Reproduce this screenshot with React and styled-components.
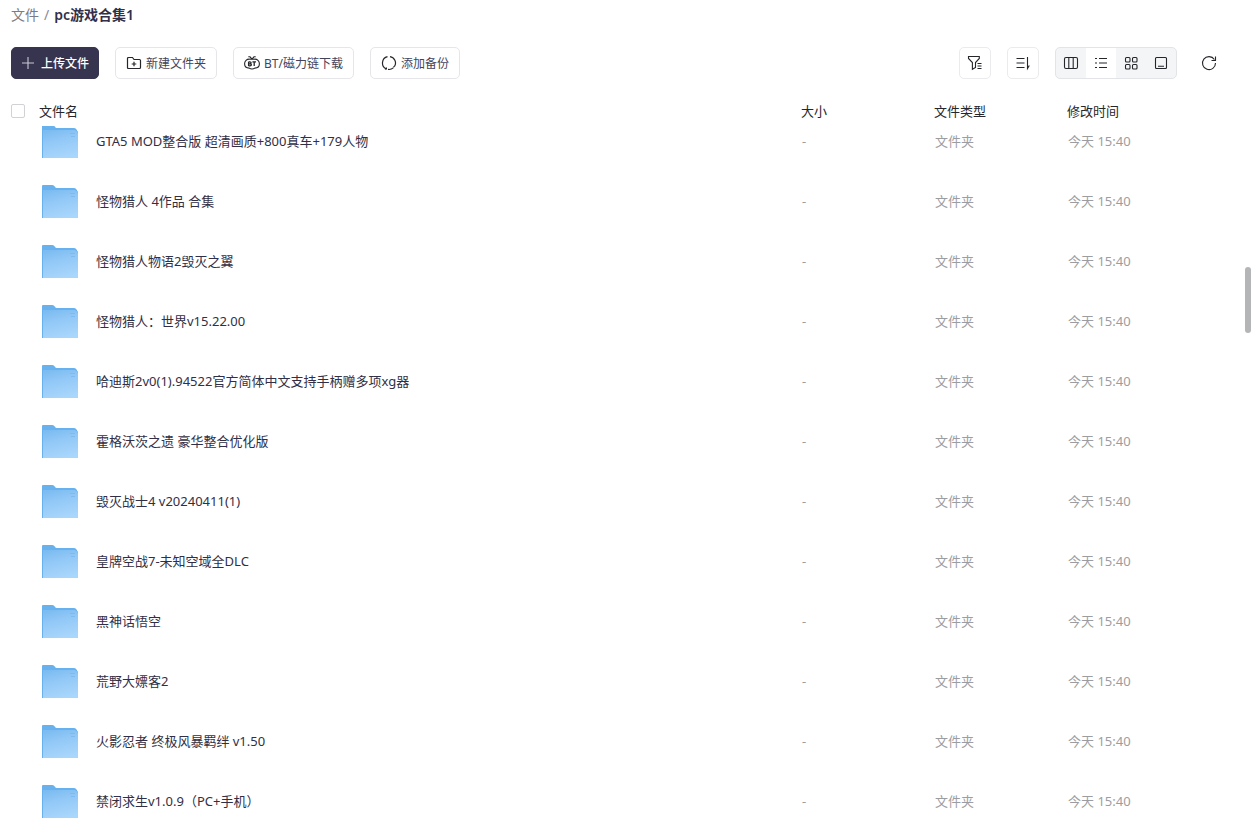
import React from "react";
import styled, { createGlobalStyle, css } from "styled-components";

const GlobalStyle = createGlobalStyle`
  *, *::before, *::after { box-sizing: border-box; }
  body {
    margin: 0;
    background: #fff;
    color: #25262b;
    font-family: "Noto Sans", "Noto Sans CJK SC", sans-serif;
    font-size: 13px;
    line-height: 20px;
  }
  button, input { font: inherit; margin: 0; }
`;

const Page = styled.main`
  position: relative;
  display: flex;
  flex-direction: column;
  height: 100vh;
  padding: 0 27px 0 11px;
  overflow: hidden;
`;

const Breadcrumb = styled.nav`
  display: flex;
  gap: 5px;
  padding-top: 5px;
  font-size: 14px;
  color: #8a8a94;
`;

const CrumbLink = styled.a`
  color: #7c7c86;
  text-decoration: none;
`;

const CrumbCurrent = styled.span`
  font-weight: 600;
  color: #312f49;
`;

const Toolbar = styled.div`
  display: flex;
  gap: 16px;
  margin-top: 22px;
`;

const Spacer = styled.div`
  flex: 1;
`;

const Button = styled.button`
  display: flex;
  align-items: center;
  gap: 4px;
  height: 32px;
  padding: 0 10px;
  border: 1px solid #e6e6ea;
  border-radius: 5px;
  background: #fff;
  color: #45435a;
  font-size: 12px;
  line-height: 20px;
  white-space: nowrap;
  ${(p) =>
    p.$primary &&
    css`
      gap: 6px;
      padding: 0 9px;
      border-color: #37344f;
      background: #37344f;
      color: #fff;
      font-weight: 500;
    `}
`;

const ButtonText = styled.span`
  padding-top: 2px;
`;

const IconButton = styled.button`
  display: grid;
  place-items: center;
  width: 32px;
  height: 32px;
  padding: 0;
  border: 1px solid ${(p) => (p.$plain ? "transparent" : "#ebebee")};
  border-radius: 5px;
  background: #fff;
  color: #25262b;
`;

const ViewSwitch = styled.div`
  display: flex;
  height: 32px;
  border: 1px solid #e2e4e7;
  border-radius: 5px;
  background: #f3f5f6;
  overflow: hidden;
`;

const ViewButton = styled.button`
  display: grid;
  place-items: center;
  width: 30px;
  padding: 0;
  border: 0;
  background: ${(p) => (p.$active ? "#fff" : "transparent")};
  color: #25262b;
`;

const Svg = styled.svg`
  display: block;
  flex: none;
  color: ${(p) => p.$color || "inherit"};
  fill: none;
  stroke: currentColor;
  stroke-width: ${(p) => p.$weight || 1.1};
`;

const FileTable = styled.table`
  display: flex;
  flex-direction: column;
  flex: 1;
  min-height: 0;
  margin-top: 16px;
`;

const Head = styled.thead`
  display: block;
`;

const Body = styled.tbody`
  display: block;
  flex: 1;
  min-height: 0;
  overflow: hidden;
`;

const Row = styled.tr`
  display: grid;
  grid-template-columns: 28px minmax(0, 1fr) 133px 133px 158px;
  align-items: center;
  height: ${(p) => (p.$head ? 31 : 60)}px;
  ${Body} &:first-child {
    margin-top: -15px;
  }
`;

const HeadCell = styled.th`
  padding: 0;
  text-align: left;
  font-weight: 400;
  color: #25262b;
`;

const Cell = styled.td`
  padding: 0 0 0 1px;
  color: #9c9da1;
`;

const NameCell = styled.td`
  grid-column: 2;
  display: flex;
  align-items: center;
  gap: 18px;
  padding: 0 0 0 3px;
  color: #312f45;
`;

const Checkbox = styled.input`
  appearance: none;
  display: block;
  width: 14px;
  height: 14px;
  border: 1px solid #d2d2d6;
  border-radius: 2px;
  background: #fff;
`;

const ScrollThumb = styled.div`
  position: absolute;
  top: 267px;
  right: 1px;
  width: 6px;
  height: 66px;
  border-radius: 3px;
  background: #b3b5b7;
`;

const FolderArt = styled.svg`
  display: block;
  flex: none;
`;

function Folder() {
  return (
    <FolderArt width="36" height="36" viewBox="0 0 36 36" aria-hidden="true">
      <path d="M0 35V3q0-1 1-1h9q1.500 0 2.500 1.200L14 5h18q2 0 2.500 1.500L36 9v26z" fill="#66b1ee" />
      <path d="M1 35V8q0-1 1-1h30q1.500 0 2.300 1L36 10v25z" fill="url(#folderFront)" />
      <path d="M28 10.500h5M29 13.500h4" stroke="#74b4ea" strokeWidth="1" opacity=".6" />
    </FolderArt>
  );
}

const icons = {
  plus: (
    <Svg width="14" height="14" viewBox="0 0 14 14" $color="#c9c8d3">
      <path d="M7 1v12M1 7h12" />
    </Svg>
  ),
  newFolder: (
    <Svg width="16" height="16" viewBox="0 0 16 16" $color="#25262b" $weight={1.2}>
      <path d="M1.500 3.500q0-1 1-1h4l1.500 2h5.500q1 0 1 1v7q0 1-1 1h-11q-1 0-1-1z" />
      <path d="M8 6.700v4.600M5.700 9h4.600" />
    </Svg>
  ),
  bt: (
    <Svg width="16" height="16" viewBox="0 0 16 16" $color="#25262b">
      <path d="M6 4.200C2.600 3.800.6 6 .6 8.800c0 2.700 1.800 4.300 4.600 4.300.8.600 1.800.9 2.800.9s2-.3 2.800-.9c2.800 0 4.600-1.600 4.600-4.300 0-2.800-2-5-5.400-4.600" />
      <path d="M4.300 1.700 6 1.800 8 4.200l2-2.400 1.700-.1M6 4.200h4" />
      <path d="M4.600 6.800v4.100M4.600 6.800h1.200q1.300.1 1.300 1 0 1-1.300 1H4.600h1.500q1.300.1 1.300 1t-1.500 1.100H4.600M8.400 6.900h3.600M10.200 6.900v4.200" strokeWidth="1.300" />
    </Svg>
  ),
  backup: (
    <Svg width="16" height="16" viewBox="0 0 16 16" $color="#25262b" $weight={1.2}>
      <path d="M5.200 13.900A6.500 6.500 0 0 1 6.500 1.700M9 1.600a6.500 6.500 0 0 1 4.600 9.700M12.300 12.900A6.500 6.500 0 0 1 7 14.400" />
      <path d="M5.400 12.500v1.500H3.900M12.300 12.400l1.300-1.300" />
    </Svg>
  ),
  filter: (
    <Svg width="16" height="16" viewBox="0 0 16 16">
      <path d="M1.500 1.500h10.800v2L8.500 7.500v5L5.400 14.200V7.500L1.500 3.500z" />
      <path d="M10.500 8.500h4M10.500 11h4M10.500 13.500h4" />
    </Svg>
  ),
  sort: (
    <Svg width="16" height="16" viewBox="0 0 16 16">
      <path d="M1.500 3.500h8M1.500 8h8M1.500 12.500h8M12.500 2v11.500l1.800-3" />
    </Svg>
  ),
  columns: (
    <Svg width="16" height="16" viewBox="0 0 16 16">
      <rect x="1.500" y="2.500" width="13" height="11" rx="1.500" />
      <path d="M5.800 2.500v11M10.200 2.500v11" />
    </Svg>
  ),
  list: (
    <Svg width="16" height="16" viewBox="0 0 16 16">
      <path d="M2 3.500h2M2 8h2M2 12.500h2M6 3.500h8M6 8h8M6 12.500h8" />
    </Svg>
  ),
  grid: (
    <Svg width="16" height="16" viewBox="0 0 16 16">
      <rect x="2.500" y="2.500" width="4.500" height="4.500" rx="1" />
      <rect x="9.500" y="2.500" width="4.500" height="4.500" rx="1" />
      <rect x="2.500" y="9.500" width="4.500" height="4.500" rx="1" />
      <rect x="9.500" y="9.500" width="4.500" height="4.500" rx="1" />
    </Svg>
  ),
  preview: (
    <Svg width="16" height="16" viewBox="0 0 16 16">
      <rect x="2.500" y="2.500" width="11" height="11" rx="1" />
      <path d="M5 11.300h6" />
    </Svg>
  ),
  refresh: (
    <Svg width="18" height="18" viewBox="0 0 18 18">
      <path d="M14.400 5.500A6.500 6.500 0 1 0 15.500 9M15.500 2.500v4h-4" />
    </Svg>
  ),
};

const views = [
  ["columns", "分栏视图"],
  ["list", "列表视图"],
  ["grid", "网格视图"],
  ["preview", "大图视图"],
];

const files = [
  "GTA5 MOD整合版 超清画质+800真车+179人物",
  "怪物猎人 4作品 合集",
  "怪物猎人物语2毁灭之翼",
  "怪物猎人：世界v15.22.00",
  "哈迪斯2v0(1).94522官方简体中文支持手柄赠多项xg器",
  "霍格沃茨之遗 豪华整合优化版",
  "毁灭战士4 v20240411(1)",
  "皇牌空战7-未知空域全DLC",
  "黑神话悟空",
  "荒野大嫖客2",
  "火影忍者 终极风暴羁绊 v1.50",
  "禁闭求生v1.0.9（PC+手机）",
];

export default function App() {
  return (
    <Page lang="zh-CN">
      <GlobalStyle />
      <Breadcrumb>
        <CrumbLink href="#files">文件</CrumbLink>
        <span>/</span>
        <CrumbCurrent>pc游戏合集1</CrumbCurrent>
      </Breadcrumb>
      <Toolbar>
        <Button $primary>{icons.plus}<ButtonText>上传文件</ButtonText></Button>
        <Button>{icons.newFolder}<ButtonText>新建文件夹</ButtonText></Button>
        <Button>{icons.bt}<ButtonText>BT/磁力链下载</ButtonText></Button>
        <Button>{icons.backup}<ButtonText>添加备份</ButtonText></Button>
        <Spacer />
        <IconButton aria-label="筛选">{icons.filter}</IconButton>
        <IconButton aria-label="排序">{icons.sort}</IconButton>
        <ViewSwitch>
          {views.map(([id, label]) => (
            <ViewButton key={id} aria-label={label} $active={id === "list"}>
              {icons[id]}
            </ViewButton>
          ))}
        </ViewSwitch>
        <IconButton $plain aria-label="刷新">{icons.refresh}</IconButton>
      </Toolbar>
      <FileTable>
        <Head>
          <Row $head>
            <HeadCell><Checkbox type="checkbox" aria-label="全选" /></HeadCell>
            <HeadCell>文件名</HeadCell>
            <HeadCell>大小</HeadCell>
            <HeadCell>文件类型</HeadCell>
            <HeadCell>修改时间</HeadCell>
          </Row>
        </Head>
        <Body>
          {files.map((name) => (
            <Row key={name}>
              <NameCell><Folder />{name}</NameCell>
              <Cell>-</Cell>
              <Cell>文件夹</Cell>
              <Cell>今天 15:40</Cell>
            </Row>
          ))}
        </Body>
      </FileTable>
      <ScrollThumb />
      <svg width="0" height="0" aria-hidden="true">
        <defs>
          <linearGradient id="folderFront" x1="0.3" y1="0" x2="0.6" y2="1">
            <stop offset="0" stopColor="#7dbcf1" />
            <stop offset="0.4" stopColor="#93c9f7" />
            <stop offset="1" stopColor="#a9d6fb" />
          </linearGradient>
        </defs>
      </svg>
    </Page>
  );
}
